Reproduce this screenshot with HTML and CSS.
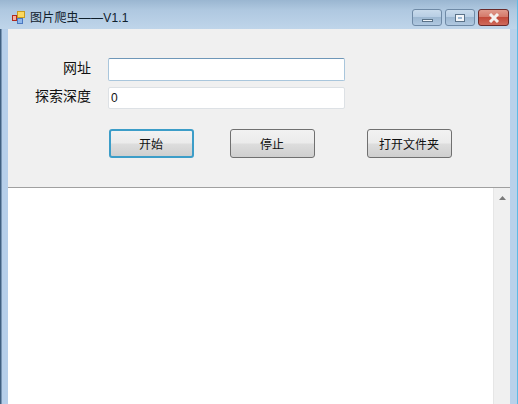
FILE: index.html
```html
<!DOCTYPE html>
<html lang="zh-CN">
<head>
    <meta charset="UTF-8">
    <title>图片爬虫——V1.1</title>
    <link rel="stylesheet" href="styles.css">
</head>
<body>
    <div class="window">
        <div class="titlebar">
            <svg class="appicon" width="13" height="13" viewBox="0 0 13 13">
                <rect x="0.5" y="4.5" width="4" height="5" fill="#f4b0a0" stroke="#b02a20"/>
                <rect x="5.5" y="0.5" width="7" height="6" fill="#fbd860" stroke="#c89a20"/>
                <rect x="5.5" y="7.5" width="5" height="5" fill="#8fb8ec" stroke="#4a78c0"/>
            </svg>
            <span class="title">图片爬虫——V1.1</span>
            <div class="controls">
                <div class="ctl ctl-min"><span class="min-glyph"></span></div>
                <div class="ctl ctl-max"><span class="max-glyph"></span></div>
                <div class="ctl ctl-close">
                    <svg width="12" height="10" viewBox="0 0 12 10">
                        <path d="M2 1 L10 9 M10 1 L2 9" stroke="#f4f0ee" stroke-width="3"/>
                    </svg>
                </div>
            </div>
        </div>
        <div class="client">
            <div class="formpanel">
                <div class="row row-url">
                    <label class="lbl">网址</label>
                    <input class="inputbox inputbox-focus" type="text">
                </div>
                <div class="row row-depth">
                    <label class="lbl">探索深度</label>
                    <input class="inputbox inputbox-depth" type="text" value="0">
                </div>
                <div class="buttons">
                    <button class="button button-default">开始</button>
                    <button class="button button-stop">停止</button>
                    <button class="button button-open">打开文件夹</button>
                </div>
            </div>
            <div class="logarea">
                <div class="logtext"></div>
                <div class="scrollbar">
                    <svg class="arrow" width="7" height="4" viewBox="0 0 7 4"><path d="M3.5 0 L7 4 L0 4 Z" fill="#7a7a7a"/></svg>
                </div>
            </div>
        </div>
    </div>
</body>
</html>
```

FILE: styles.css
```css
html, body {
    margin: 0;
    padding: 0;
    height: 100%;
    overflow: hidden;
    background: #b9d1ea;
}

body {
    font-family: "Liberation Sans", "Noto Sans CJK SC", sans-serif;
    color: #111;
}

.window {
    box-sizing: border-box;
    width: 518px;
    height: 404px;
    display: flex;
    flex-direction: column;
    padding: 0 7px 0 8px;
    background: linear-gradient(to right, #3f5f80 0, #3f5f80 1px, #b6cfea 2px, #b9d1ea 100%);
    border-right: 1px solid #5cbbe6;
}

.titlebar {
    height: 29px;
    flex: none;
    margin: 0 -7px 0 -8px;
    padding: 9px 8px 0 12px;
    box-sizing: border-box;
    display: flex;
    align-items: flex-start;
    background: linear-gradient(to bottom, #9ab6d1 0, #afc8e0 10px, #bfd5ea 100%);
}

.appicon {
    flex: none;
    margin: 2px 5px 0 0;
}

.title {
    font-size: 12px;
    line-height: 18px;
    letter-spacing: 0.2px;
    color: #10202c;
}

.controls {
    margin-left: auto;
    display: flex;
    gap: 3px;
}

.ctl {
    box-sizing: border-box;
    height: 17px;
    border: 1px solid #6f8aa6;
    border-radius: 3px;
    display: flex;
    align-items: center;
    justify-content: center;
    background: linear-gradient(to bottom, #c9dbec 0, #b8cee4 45%, #9db8d2 50%, #b0c8e0 100%);
}

.ctl-min {
    width: 30px;
}

.ctl-max {
    width: 30px;
}

.ctl-close {
    width: 31px;
    border-color: #6a2a2a;
    background: linear-gradient(to bottom, #e09a8c 0, #d4796a 45%, #c24a3a 50%, #cf6a5c 100%);
}

.min-glyph {
    display: block;
    width: 9px;
    height: 1px;
    margin-top: 5px;
    background: #eef3f8;
    border: 1px solid #5a7288;
}

.max-glyph {
    display: block;
    width: 4px;
    height: 2px;
    border: 2px solid #f2f5f9;
    outline: 1px solid #5a7288;
}

.client {
    flex: 1;
    display: flex;
    flex-direction: column;
    min-height: 0;
    background: #f0f0f0;
}

.formpanel {
    height: 159px;
    flex: none;
    box-sizing: border-box;
    padding-top: 29px;
    border-bottom: 1px solid #a0a0a0;
    background: #f0f0f0;
}

.row {
    display: flex;
    align-items: center;
}

.row-depth {
    margin-top: 6px;
}

.lbl {
    width: 83px;
    line-height: 16px;
    padding-bottom: 4px;
    text-align: right;
    font-size: 14px;
    margin-right: 17px;
}

.inputbox {
    box-sizing: border-box;
    width: 237px;
    height: 23px;
    margin: 0;
    padding: 0 2px;
    background: #fff;
    border: 1px solid #dde1e5;
    border-radius: 2px;
    font-family: "Liberation Sans", sans-serif;
    font-size: 12px;
    color: #111;
    outline: none;
}

.inputbox-focus {
    border-color: #a9c6dc;
    border-top-color: #6f97b8;
}

.inputbox-depth {
    height: 22px;
    padding-bottom: 1px;
}

.buttons {
    display: flex;
    margin-top: 20px;
    padding-left: 101px;
}

.button {
    box-sizing: border-box;
    width: 85px;
    height: 29px;
    padding: 0 1px 0 0;
    border: 1px solid #707070;
    border-radius: 3px;
    background: linear-gradient(to bottom, #f2f2f2 0, #ebebeb 48%, #dddddd 52%, #cfcfcf 100%);
    font-family: "Liberation Sans", "Noto Sans CJK SC", sans-serif;
    font-size: 12px;
    color: #111;
}

.button-default {
    border: 2px solid #3c9dc8;
}

.button-stop {
    margin-left: 36px;
}

.button-open {
    margin-left: 52px;
}

.logarea {
    flex: 1;
    display: flex;
    min-height: 0;
    background: #fff;
}

.logtext {
    flex: 1;
}

.scrollbar {
    width: 17px;
    flex: none;
    box-sizing: border-box;
    padding-top: 8px;
    display: flex;
    justify-content: center;
    align-items: flex-start;
    background: #f0f0f0;
    border-left: 1px solid #e6e6e6;
}

.arrow {
    display: block;
}
```
